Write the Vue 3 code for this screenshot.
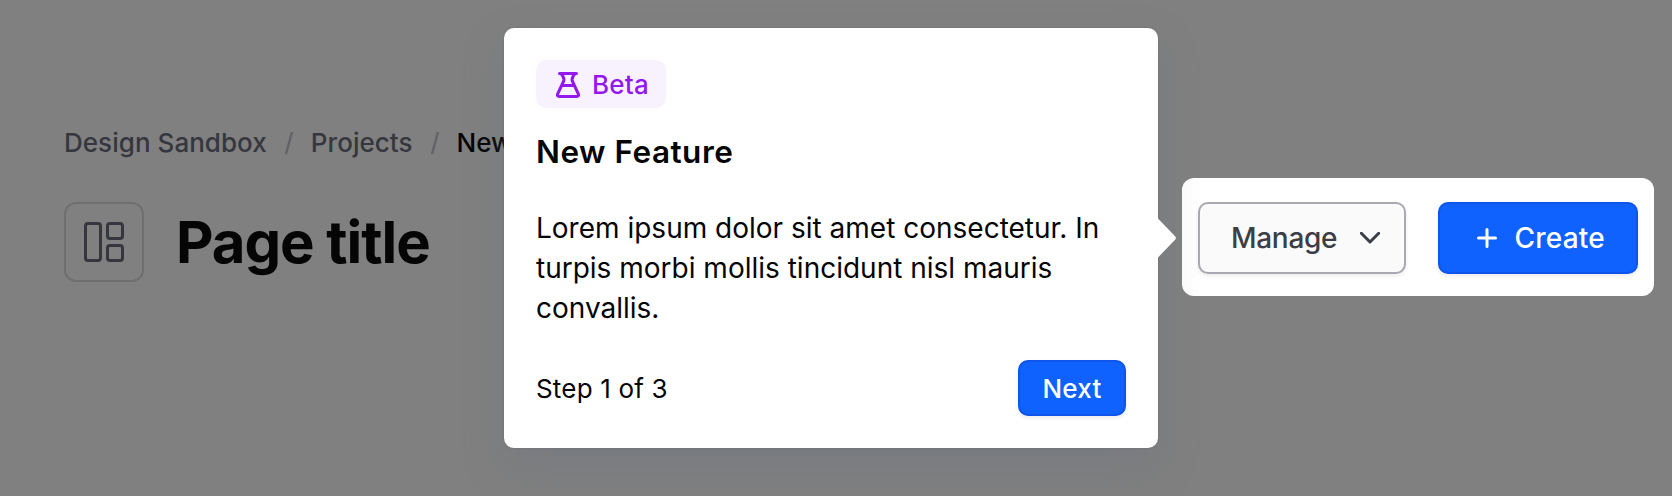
<script setup>
const crumbs = ['Design Sandbox', 'Projects']
</script>

<template>
  <div class="screen">
    <header class="page">
      <nav class="crumbs">
        <template v-for="c in crumbs" :key="c">
          <a class="crumb">{{ c }}</a>
          <svg class="slash" width="8" height="24" viewBox="0 0 8 24"><path d="M7 1 L1 23" /></svg>
        </template>
        <span class="current">New</span>
      </nav>
      <div class="heading">
        <span class="page-icon">
          <svg width="40" height="40" viewBox="0 0 40 40">
            <rect x="1.5" y="1.5" width="15" height="37" rx="2.5" />
            <rect x="23.5" y="1.5" width="15" height="15" rx="2.5" />
            <rect x="23.5" y="23.5" width="15" height="15" rx="2.5" />
          </svg>
        </span>
        <h1>Page title</h1>
      </div>
    </header>

    <div class="spotlight">
      <button class="btn manage">
        <span>Manage</span>
        <svg width="20" height="12" viewBox="0 0 20 12"><path d="M1.3 1.3 L10 10 L18.7 1.3" /></svg>
      </button>
      <button class="btn create">
        <svg width="20" height="20" viewBox="0 0 20 20"><path d="M10 1.5V18.5M1.5 10H18.5" /></svg>
        <span>Create</span>
      </button>
    </div>

    <section class="popover">
      <span class="badge">
        <svg width="24" height="26" viewBox="0 0 24 26">
          <path d="M3.5 1.5H20.5M5 1.5C7 4 8.7 6.5 7.7 9L1.7 21.8C1 23.5 1.7 24.5 3.3 24.5H20.7C22.3 24.5 23 23.5 22.3 21.8L16.3 9C15.3 6.5 17 4 19 1.5M6 13.6H18" />
        </svg>
        <span>Beta</span>
      </span>
      <h2>New Feature</h2>
      <p>Lorem ipsum dolor sit amet consectetur. In turpis morbi mollis tincidunt nisl mauris convallis.</p>
      <footer>
        <span class="step">Step 1 of 3</span>
        <button class="btn next">Next</button>
      </footer>
      <svg class="arrow" width="19" height="40" viewBox="0 0 19 40"><path d="M0 .5 L17.3 18.6 Q18.5 20 17.3 21.4 L0 39.5Z" /></svg>
    </section>
  </div>
</template>

<style>
body {
  margin: 0;
}
</style>

<style scoped>
.screen {
  position: relative;
  box-sizing: border-box;
  width: 1672px;
  height: 496px;
  overflow: hidden;
  background: #808080;
  font-family: Inter, 'Liberation Sans', sans-serif;
}
.page {
  padding: 122px 64px 0;
}
.crumbs {
  display: flex;
  align-items: center;
  height: 40px;
  font-size: 26px;
  font-weight: 500;
  letter-spacing: 0.04px;
  white-space: nowrap;
}
.crumb {
  color: #36373e;
}
.slash {
  margin: 1px 18px 0;
  fill: none;
  stroke: #626367;
  stroke-width: 2.4;
}
.current {
  color: #050506;
}
.heading {
  display: flex;
  align-items: center;
  gap: 32px;
  margin-top: 40px;
}
.page-icon {
  display: grid;
  place-items: center;
  box-sizing: border-box;
  width: 80px;
  height: 80px;
  border: 2px solid #6f6f71;
  border-radius: 12px;
}
.page-icon svg {
  fill: none;
  stroke: #36373e;
  stroke-width: 3;
}
h1 {
  margin: 0;
  font-size: 58px;
  font-weight: 700;
  line-height: 80px;
  letter-spacing: -1.04px;
  color: #050506;
}
.spotlight {
  position: absolute;
  left: 1182px;
  top: 178px;
  display: flex;
  gap: 32px;
  box-sizing: border-box;
  height: 118px;
  padding: 24px 16px;
  border-radius: 12px;
  background: #fff;
}
.btn {
  display: flex;
  align-items: center;
  box-sizing: border-box;
  padding: 0;
  border: 2px solid #0f55eb;
  border-radius: 10px;
  background: #0f62fe;
  color: #fff;
  font-family: inherit;
  font-size: 28px;
  font-weight: 500;
  letter-spacing: 0.2px;
  box-shadow: 0 2px 4px rgba(0, 0, 0, 0.08);
}
.btn svg {
  fill: none;
  stroke: currentColor;
  stroke-width: 3;
  stroke-linecap: round;
  stroke-linejoin: round;
}
.manage {
  justify-content: space-between;
  width: 208px;
  height: 72px;
  padding: 0 24px 0 31px;
  border-color: #a9a9af;
  background: #fafafa;
  color: #3b3e47;
  letter-spacing: -0.3px;
}
.create {
  gap: 18px;
  width: 200px;
  height: 72px;
  padding-left: 36.5px;
}
.popover {
  position: absolute;
  left: 504px;
  top: 28px;
  box-sizing: border-box;
  width: 654px;
  height: 420px;
  padding: 32px;
  border-radius: 10px;
  background: #fff;
  color: #050506;
  box-shadow: 0 18px 42px rgba(100, 110, 125, 0.3), 0 0 2px rgba(90, 95, 110, 0.5);
}
.badge {
  display: flex;
  align-items: center;
  gap: 12px;
  box-sizing: border-box;
  width: 130px;
  height: 48px;
  padding-left: 20px;
  border-radius: 10px;
  background: #f8f2ff;
  color: #9218ee;
  font-size: 26px;
  font-weight: 500;
  letter-spacing: 0.26px;
}
.badge svg {
  margin-top: 1px;
  fill: none;
  stroke: currentColor;
  stroke-width: 3;
  stroke-linecap: round;
  stroke-linejoin: round;
}
h2 {
  margin: 23px 0 0;
  font-size: 31.5px;
  font-weight: 600;
  line-height: 42px;
  letter-spacing: 0.5px;
}
p {
  margin: 35px 0 0;
  font-size: 28px;
  line-height: 40px;
}
footer {
  display: flex;
  align-items: center;
  justify-content: space-between;
  margin-top: 32px;
}
.step {
  font-size: 26px;
  letter-spacing: 0.18px;
}
.next {
  justify-content: center;
  width: 108px;
  height: 56px;
  font-size: 26px;
  letter-spacing: 0.2px;
}
.arrow {
  position: absolute;
  left: 654px;
  top: 190px;
  fill: #fff;
}
</style>
